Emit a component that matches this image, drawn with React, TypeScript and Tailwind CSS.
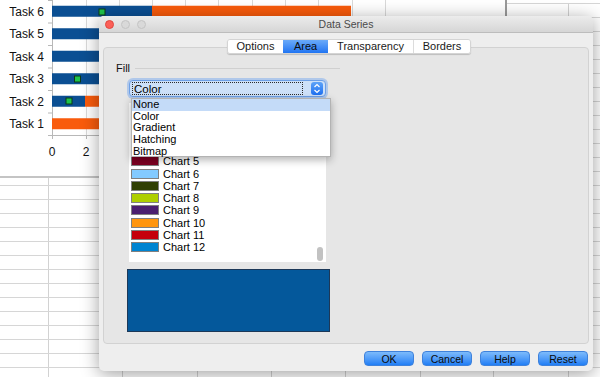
import React from "react";

const FONT = { fontFamily: '"Liberation Sans", Arial, Helvetica, sans-serif' };

const colWidths = ["w-[49px]", "w-[74px]", "w-[75px]", "w-[74px]", "w-[74px]", "w-[75px]", "w-[73px]", "w-[75px]"];

function SheetGrid() {
  const rows = Array.from({ length: 27 });
  return (
    <div className="flex flex-col">
      <div className="h-[4px] border-b border-[#d6d6d6]" />
      {rows.map((_, r) => (
        <div key={r} className="flex h-[14px] border-b border-[#d6d6d6]">
          {colWidths.map((w, c) => (
            <div key={c} className={`${w} shrink-0 border-r border-[#d2d2d2]`} />
          ))}
          <div className="flex-1" />
        </div>
      ))}
    </div>
  );
}

const BLUE = "#0b4f93";
const ORANGE = "#f95b0c";

function Chart() {
  const grid = [86, 119, 152, 185, 218, 252, 285, 318, 352, 385];
  const tasks = ["Task 6", "Task 5", "Task 4", "Task 3", "Task 2", "Task 1"];
  const cy = (i: number) => 11.25 + 22.5 * i;
  const bars: { i: number; x1: number; x2: number; c: string }[] = [
    { i: 0, x1: 52, x2: 152, c: BLUE },
    { i: 0, x1: 152, x2: 351, c: ORANGE },
    { i: 1, x1: 52, x2: 200, c: BLUE },
    { i: 2, x1: 52, x2: 200, c: BLUE },
    { i: 3, x1: 52, x2: 200, c: BLUE },
    { i: 4, x1: 52, x2: 85, c: BLUE },
    { i: 4, x1: 85, x2: 200, c: ORANGE },
    { i: 5, x1: 52, x2: 200, c: ORANGE },
  ];
  const markers = [
    { x: 102, y: 12 },
    { x: 77.5, y: 79 },
    { x: 69, y: 101 },
  ];
  return (
    <svg width="505" height="176" className="block" style={FONT}>
      {grid.map((x) => (
        <line key={x} x1={x + 0.5} y1={0} x2={x + 0.5} y2={135} stroke="#d9d9d9" strokeWidth={1} />
      ))}
      {grid.map((x) => (
        <line key={"t" + x} x1={x + 0.5} y1={135} x2={x + 0.5} y2={139} stroke="#b8b8b8" strokeWidth={1} />
      ))}
      <line x1={52.5} y1={0} x2={52.5} y2={139} stroke="#b8b8b8" />
      <line x1={52} y1={135.5} x2={386} y2={135.5} stroke="#b8b8b8" />
      {[0, 1, 2, 3, 4, 5, 6].map((k) => (
        <line key={k} x1={48} y1={22.5 * k + 0.5} x2={52} y2={22.5 * k + 0.5} stroke="#b8b8b8" />
      ))}
      {bars.map((b, k) => (
        <rect key={k} x={b.x1} y={cy(b.i) - 5.5} width={b.x2 - b.x1} height={11} fill={b.c} />
      ))}
      {markers.map((m, k) => (
        <rect key={k} x={m.x - 3} y={m.y - 3} width={6} height={6} fill="#1fc44a" stroke="#0d3b16" strokeWidth={1} />
      ))}
      {tasks.map((t, i) => (
        <text key={t} x={44} y={cy(i) + 4.3} textAnchor="end" fontSize="12" fill="#111">
          {t}
        </text>
      ))}
      <text x={52} y={156} textAnchor="middle" fontSize="12" fill="#111">0</text>
      <text x={86} y={156} textAnchor="middle" fontSize="12" fill="#111">2</text>
    </svg>
  );
}

const swatches = [
  { n: "Chart 5", c: "#7e0021" },
  { n: "Chart 6", c: "#83caff" },
  { n: "Chart 7", c: "#314004" },
  { n: "Chart 8", c: "#aecf00" },
  { n: "Chart 9", c: "#4b1f6f" },
  { n: "Chart 10", c: "#ff950e" },
  { n: "Chart 11", c: "#c5000b" },
  { n: "Chart 12", c: "#0084d1" },
];

function Dialog() {
  return (
    <div
      className="absolute left-[99px] top-[16px] w-[494px] h-[355px] flex flex-col rounded-[5px] bg-[#eeeeee] shadow-[0_3px_18px_rgba(0,0,0,0.38)] overflow-hidden"
      style={FONT}
    >
      {/* Title bar */}
      <div className="grid grid-cols-[1fr_auto_1fr] items-center h-[17px] shrink-0 border-b border-[#bdbdbd] bg-gradient-to-b from-[#ececec] to-[#d6d6d6]">
        <div className="flex items-center gap-[7px] pl-[6px]">
          <div className="w-[9px] h-[9px] rounded-full bg-[#fc5f57] border border-[#de4840]" />
          <div className="w-[9px] h-[9px] rounded-full bg-[#d9d9d9] border border-[#c4c4c4]" />
          <div className="w-[9px] h-[9px] rounded-full bg-[#d9d9d9] border border-[#c4c4c4]" />
        </div>
        <div className="text-[10.5px] leading-[12px] text-[#4a4a4a]">Data Series</div>
        <div />
      </div>

      {/* Body */}
      <div className="flex flex-col flex-1 px-[4px] pt-[6px]">
        {/* Tabs */}
        <div className="relative z-10 flex justify-center pl-[6px] -mb-[7px]">
          <div className="flex h-[15px] rounded-[3px] shadow-[0_1px_1px_rgba(0,0,0,0.18)] border border-[#d4d4d4] overflow-hidden text-[11px] leading-[13px] text-[#1a1a1a]">
            <div className="w-[55px] flex items-center justify-center bg-white">Options</div>
            <div className="w-[45px] flex items-center justify-center bg-gradient-to-b from-[#6aaaf9] to-[#1f74f2] text-[#0d0d0d]">Area</div>
            <div className="w-[86px] flex items-center justify-center bg-white border-r border-[#dcdcdc]">Transparency</div>
            <div className="w-[56px] flex items-center justify-center bg-white">Borders</div>
          </div>
        </div>

        {/* Panel */}
        <div className="h-[297px] shrink-0 rounded-[4px] border border-[#d2d2d2] bg-[#e6e6e6] flex flex-col">
          {/* Fill row */}
          <div className="flex items-center pl-[12px] pt-[14px] h-[27px]">
            <span className="text-[11px] leading-[13px] text-[#111]">Fill</span>
            <div className="ml-[5px] w-[205px] h-px bg-[#d0d0d0]" />
          </div>

          {/* Dropdown */}
          <div className="relative ml-[25px] mt-[5px] w-[197px] h-[17px] z-20">
            <div className="w-full h-full flex items-center rounded-[4px] border border-[#6d9fe6] bg-[#cde0f8] shadow-[0_0_0_2px_rgba(110,165,240,0.45)] pl-[2px] pr-[2px]">
              <div className="w-[171px] h-[13px] border border-dotted border-[#2a2a2a] flex items-center pl-[1px] text-[11.5px] leading-[12px] text-black">
                Color
              </div>
              <div className="ml-auto w-[12px] h-[13px] rounded-[3px] bg-gradient-to-b from-[#5ea3f8] to-[#1d6ff0] flex items-center justify-center">
                <svg width="8" height="11" viewBox="0 0 8 11">
                  <path d="M1.5 4 L4 1.5 L6.5 4" fill="none" stroke="#fff" strokeWidth="1.2" />
                  <path d="M1.5 7 L4 9.5 L6.5 7" fill="none" stroke="#fff" strokeWidth="1.2" />
                </svg>
              </div>
            </div>
            {/* Popup menu */}
            <div className="absolute left-[2px] top-[18px] w-[200px] h-[59px] bg-white border border-[#b3b3b3] shadow-[0_3px_8px_rgba(0,0,0,0.3)] flex flex-col text-[11px] leading-[11.7px] text-black">
              <div className="h-[11.7px] bg-[#c4dbf8] pl-[1px]">None</div>
              <div className="h-[11.7px] pl-[1px]">Color</div>
              <div className="h-[11.7px] pl-[1px]">Gradient</div>
              <div className="h-[11.7px] pl-[1px]">Hatching</div>
              <div className="h-[11.7px] pl-[1px]">Bitmap</div>
            </div>
          </div>

          {/* Color list */}
          <div className="relative ml-[25px] mt-[6px] w-[197px] h-[159px] bg-white overflow-hidden flex flex-col justify-end pb-[8.5px]">
            {swatches.map((s) => (
              <div key={s.n} className="flex items-center h-[12.3px] shrink-0 pl-[2px]">
                <div className="w-[28px] h-[10px] border border-[#808080]" style={{ backgroundColor: s.c }} />
                <span className="ml-[4px] text-[11px] leading-[12px] text-black">{s.n}</span>
              </div>
            ))}
            <div className="absolute right-[3px] bottom-[1px] w-[6px] h-[14px] rounded-full bg-[#c2c2c2]" />
          </div>

          {/* Preview */}
          <div className="ml-[23px] mt-[7px] w-[203px] h-[63px] bg-[#04589b] border border-[#1c3858]" />
        </div>

        {/* Buttons */}
        <div className="flex justify-end gap-[8px] pr-[1px] mt-[7px]">
          {["OK", "Cancel", "Help", "Reset"].map((b) => (
            <div
              key={b}
              className="w-[50px] h-[15px] rounded-[4px] border border-[#3f82dc] bg-gradient-to-b from-[#7dbbfb] to-[#1f7ef5] flex items-center justify-center text-[10.5px] leading-[12px] text-[#0a0a0a]"
            >
              {b}
            </div>
          ))}
        </div>
      </div>
    </div>
  );
}

export default function App() {
  return (
    <div className="relative w-[600px] h-[377px] overflow-hidden bg-white" style={FONT}>
      <SheetGrid />
      <div className="absolute left-0 top-0 w-[507px] h-[178px] bg-white border-r-2 border-b-2 border-r-[#9a9a9a] border-b-[#c4c4c4]">
        <Chart />
      </div>
      <Dialog />
    </div>
  );
}
